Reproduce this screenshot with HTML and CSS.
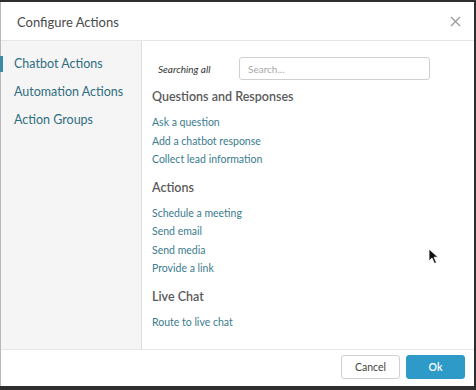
FILE: index.html
```html
<!DOCTYPE html>
<html lang="en">
<head>
  <meta charset="UTF-8" />
  <meta name="viewport" content="width=device-width, initial-scale=1.0" />
  <title>Configure Actions</title>
  <link rel="stylesheet" href="styles.css">
</head>
<body>
  <div class="dialog">
    <div class="dialog-header">
      <h1>Configure Actions</h1>
      <button class="close-btn" aria-label="Close">
        <svg width="11" height="11" viewBox="0 0 11 11"><path d="M1 1L10 10M10 1L1 10" stroke="#9a9a9a" stroke-width="1.3" fill="none"/></svg>
      </button>
    </div>

    <div class="dialog-body">
      <ul class="side-nav">
        <li class="active">Chatbot Actions</li>
        <li>Automation Actions</li>
        <li>Action Groups</li>
      </ul>

      <div class="action-list">
        <div class="search-row">
          <span class="search-label">Searching all</span>
          <input class="search-input" type="text" placeholder="Search...">
        </div>

        <div class="section">
          <h2>Questions and Responses</h2>
          <a href="#">Ask a question</a>
          <a href="#">Add a chatbot response</a>
          <a href="#">Collect lead information</a>
        </div>

        <div class="section">
          <h2>Actions</h2>
          <a href="#">Schedule a meeting</a>
          <a href="#">Send email</a>
          <a href="#">Send media</a>
          <a href="#">Provide a link</a>
        </div>

        <div class="section">
          <h2>Live Chat</h2>
          <a href="#">Route to live chat</a>
        </div>

        <svg class="cursor" width="12" height="17" viewBox="0 0 12 17">
          <path d="M1 1L1 13L4 10L6.5 15.5L8.5 14.5L6 9.2L10 9.2Z" fill="#111" stroke="#fff" stroke-width="0.8"/>
        </svg>
      </div>
    </div>

    <div class="dialog-footer">
      <button class="btn btn-cancel">Cancel</button>
      <button class="btn btn-ok">Ok</button>
    </div>
  </div>
</body>
</html>
```

FILE: styles.css
```css
* { margin: 0; padding: 0; box-sizing: border-box; }
body {
  font-family: Lato, "Open Sans", sans-serif;
  background: #2e2e2e;
  color: #444;
  width: 476px;
  height: 390px;
  overflow: hidden;
}
.dialog {
  margin-top: 2px;
  width: 474px;
  height: 384px;
  background: #fff;
  border-left: 1px solid #b8b8b8;
  display: flex;
  flex-direction: column;
}
.dialog-header {
  height: 39px;
  flex: none;
  display: flex;
  align-items: center;
  justify-content: space-between;
  padding: 0 13px 0 16px;
  border-bottom: 1px solid #e6e6e6;
}
.dialog-header h1 {
  font-size: 13px;
  font-weight: 400;
  color: #4a4a4a;
  padding-top: 1px;
}
.close-btn {
  background: none;
  border: none;
  display: flex;
  cursor: pointer;
}
.dialog-body {
  flex: 1;
  display: flex;
  min-height: 0;
}
.side-nav {
  list-style: none;
  width: 141px;
  flex: none;
  background: #f5f5f5;
  border-right: 1px solid #dedede;
  padding-top: 9px;
}
.side-nav li {
  position: relative;
  font-size: 12.5px;
  line-height: 16px;
  padding: 6px 13px;
  color: #2f6d80;
  cursor: pointer;
}
.side-nav li.active::before {
  content: "";
  position: absolute;
  left: -1px;
  top: 6px;
  width: 3px;
  height: 16px;
  background: #3d8aa6;
}
.action-list {
  position: relative;
  flex: 1;
  padding: 16px 0 0 10px;
}
.search-row {
  display: flex;
  align-items: center;
  height: 23px;
  margin-bottom: 8px;
}
.search-label {
  font-size: 10px;
  font-style: italic;
  color: #333;
  margin-left: 6px;
  width: 81px;
}
.search-input {
  width: 191px;
  height: 23px;
  border: 1px solid #cfcfcf;
  border-radius: 3px;
  padding: 0 8px;
  font-family: inherit;
  font-size: 10px;
  color: #444;
}
.search-input::placeholder { color: #a8a8a8; }
.section {
  display: flex;
  flex-direction: column;
  margin-bottom: 10px;
}
.section h2 {
  font-size: 12.5px;
  font-weight: 600;
  line-height: 18px;
  color: #5a5a5a;
  margin-bottom: 7px;
}
.section a {
  font-size: 10.5px;
  line-height: 18.5px;
  color: #3a7b8e;
  text-decoration: none;
}
.cursor {
  position: absolute;
  left: 286px;
  top: 207px;
}
.dialog-footer {
  height: 37px;
  flex: none;
  border-top: 1px solid #e6e6e6;
  display: flex;
  align-items: center;
  justify-content: flex-end;
  gap: 6px;
  padding: 0 9px 2px 0;
}
.btn {
  height: 24px;
  width: 59px;
  border-radius: 3px;
  font-family: inherit;
  font-size: 10.5px;
  cursor: pointer;
}
.btn-cancel {
  background: #fff;
  border: 1px solid #d0d0d0;
  color: #444;
}
.btn-ok {
  background: #2e9ac8;
  border: 1px solid #2e9ac8;
  color: #fff;
  font-weight: 600;
}
```
